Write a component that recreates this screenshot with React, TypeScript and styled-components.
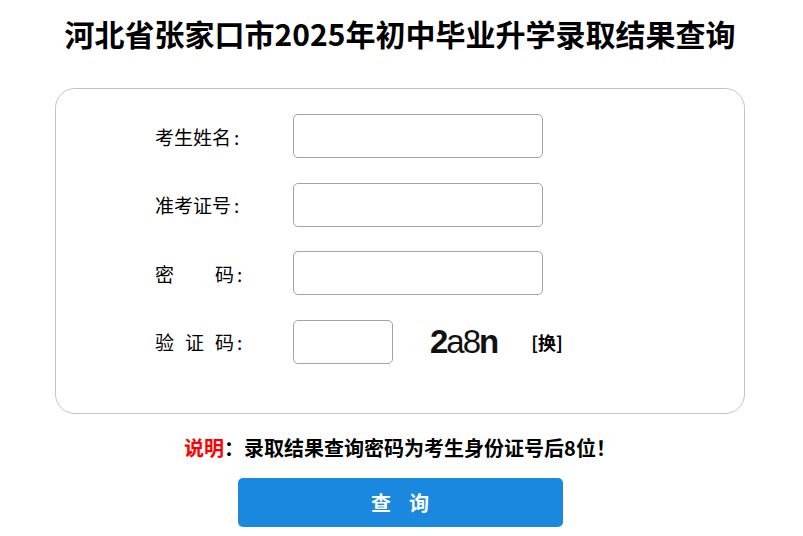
import React from "react";
import styled, { createGlobalStyle } from "styled-components";

const GlobalStyle = createGlobalStyle`
  body {
    margin: 0;
    background: #fff;
    font-family: "Microsoft YaHei", "Noto Sans CJK SC", "Liberation Sans", sans-serif;
    color: #000;
  }
`;

const Page = styled.div`
  width: 800px;
  display: flex;
  flex-direction: column;
  align-items: center;
`;

const Title = styled.h1`
  margin: 10px 0 0;
  font-size: 30px;
  line-height: 46px;
  font-weight: 700;
  letter-spacing: 0;
`;

const Card = styled.div`
  margin-top: 32px;
  width: 690px;
  box-sizing: border-box;
  border: 1px solid #c4c4c4;
  border-radius: 20px;
  padding: 25px 0 49px 99px;
  display: flex;
  flex-direction: column;
  gap: 24.5px;
`;

const Row = styled.div`
  display: flex;
  align-items: center;
  height: 44px;
`;

const Label = styled.label`
  width: 138px;
  font-size: 19px;
  white-space: nowrap;
`;

const Space = styled.span<{ $w: number }>`
  display: inline-block;
  width: ${(p) => p.$w}px;
`;

const Colon = styled.span`
  margin-left: 3px;
`;

const Input = styled.input<{ $w?: number }>`
  width: ${(p) => p.$w ?? 250}px;
  height: 44px;
  box-sizing: border-box;
  border: 1px solid #a3a3a3;
  border-radius: 5px;
  outline: none;
  font-size: 16px;
`;

const Captcha = styled.div`
  margin-left: 37px;
  font-family: "Liberation Sans", Arial, sans-serif;
  font-size: 33px;
  letter-spacing: -2px;
  color: #111;
  line-height: 1;
  user-select: none;
`;

const CapChar = styled.span<{ $bold?: boolean }>`
  font-weight: ${(p) => (p.$bold ? 700 : 400)};
`;

const Swap = styled.a`
  margin-left: 34px;
  font-size: 18px;
  font-weight: 700;
  color: #000;
  cursor: pointer;
`;

const Note = styled.p`
  margin: 20px 0 0;
  font-size: 20px;
  font-weight: 700;
  line-height: 28px;
`;

const Red = styled.span`
  color: #ff0000;
`;

const Button = styled.button`
  margin-top: 16px;
  width: 325px;
  height: 49px;
  border: none;
  border-radius: 5px;
  background: #1b88e0;
  color: #fff;
  font-family: inherit;
  font-size: 20px;
  font-weight: 700;
  white-space: pre;
  cursor: pointer;
`;

export default function App() {
  return (
    <Page>
      <GlobalStyle />
      <Title>河北省张家口市2025年初中毕业升学录取结果查询</Title>
      <Card>
        <Row>
          <Label>
            考生姓名<Colon>:</Colon>
          </Label>
          <Input type="text" />
        </Row>
        <Row>
          <Label>
            准考证号<Colon>:</Colon>
          </Label>
          <Input type="text" />
        </Row>
        <Row>
          <Label>
            密<Space $w={41} />码<Colon>:</Colon>
          </Label>
          <Input type="password" />
        </Row>
        <Row>
          <Label>
            验<Space $w={11} />证<Space $w={11} />码<Colon>:</Colon>
          </Label>
          <Input type="text" $w={100} />
          <Captcha>
            <CapChar $bold>2</CapChar>
            <CapChar>a</CapChar>
            <CapChar>8</CapChar>
            <CapChar $bold>n</CapChar>
          </Captcha>
          <Swap>[换]</Swap>
        </Row>
      </Card>
      <Note>
        <Red>说明</Red>：录取结果查询密码为考生身份证号后8位！
      </Note>
      <Button>{"查    询"}</Button>
    </Page>
  );
}
